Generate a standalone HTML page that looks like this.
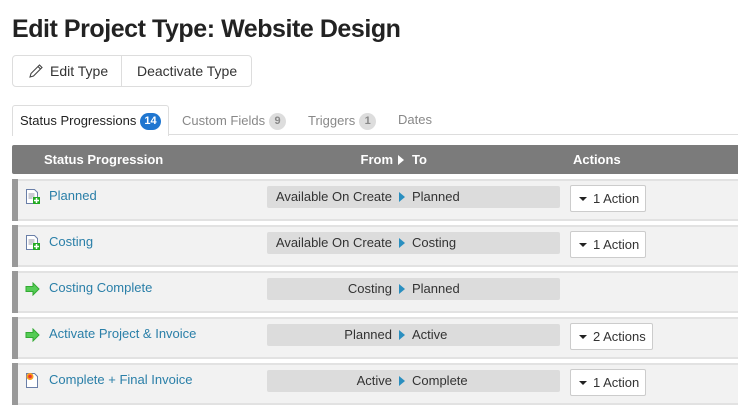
<!DOCTYPE html>
<html><head><meta charset="utf-8"><style>
*{margin:0;padding:0;box-sizing:border-box}
body{width:738px;height:410px;background:#fff;font-family:"Liberation Sans",Arial,sans-serif;position:relative;overflow:hidden;color:#222}
.a{position:absolute}
h1{position:absolute;left:12px;top:15px;font-size:25px;font-weight:bold;color:#222;letter-spacing:-0.45px;white-space:nowrap}
.btns{left:12px;top:55px;width:240px;height:32px;border:1px solid #ddd;border-radius:4px;font-size:14px;color:#333}
.btns .d{position:absolute;left:108px;top:0;bottom:0;border-left:1px solid #ddd}
.tab{font-size:13px;white-space:nowrap}
.badge{display:inline-block;border-radius:9px;height:17px;min-width:17px;padding:0 4px;font-size:11px;line-height:17px;text-align:center;font-weight:bold;vertical-align:1px;margin-left:4px}
.hdr{left:12px;top:145px;width:726px;height:29px;background:#7b7b7b;color:#fff;font-size:13px;font-weight:bold;border-radius:2px 0 0 2px}
.row{left:12px;width:726px;height:42px;background:#f2f2f2;border-top:2px solid #e2e2e2;border-bottom:2px solid #e2e2e2}
.row .bar{position:absolute;left:0;top:-2px;bottom:-2px;width:6px;background:#999}
.row .nm{position:absolute;left:37px;top:7px;font-size:13px;color:#2a7fa8;white-space:nowrap}
.row .ic{position:absolute;left:13px;top:7px}
.pill{position:absolute;left:255px;top:5px;width:293px;height:22px;background:#dcdcdc;border-radius:2px;font-size:13px;color:#333}
.pill .f{position:absolute;right:168px;top:3px;white-space:nowrap}
.pill .t{position:absolute;left:145px;top:3px;white-space:nowrap}
.pill .ar{position:absolute;left:132px;top:6px;width:0;height:0;border-left:6px solid #2a8fc0;border-top:5px solid transparent;border-bottom:5px solid transparent}
.act{position:absolute;left:558px;top:4px;height:27px;background:#fff;border:1px solid #ccc;border-radius:2px;font-size:13px;color:#333;padding:0 6px 0 22px;line-height:25px;white-space:nowrap}
.act:before{content:"";position:absolute;left:8px;top:11px;border-top:4px solid #222;border-left:4px solid transparent;border-right:4px solid transparent}
</style></head><body>
<h1>Edit Project Type: Website Design</h1>
<div class="a btns"><div class="d"></div>
<svg class="a" style="left:15px;top:7px" width="16" height="16" viewBox="0 0 16 16"><path d="M2 14 L3 10.5 L11.5 2 L14 4.5 L5.5 13 Z M10 3.5 L12.5 6" fill="none" stroke="#444" stroke-width="1.1"/></svg>
<span class="a" style="left:37px;top:7px">Edit Type</span>
<span class="a" style="left:124px;top:7px">Deactivate Type</span></div>
<div class="a" style="left:12px;top:105px;width:157px;height:31px;border:1px solid #ddd;border-bottom:none;border-radius:3px 3px 0 0;background:#fff"></div>
<div class="a" style="left:169px;top:134px;width:569px;border-top:1px solid #ddd"></div>
<div class="a tab" style="left:20px;top:113px;color:#222">Status Progressions<span class="badge" style="background:#1f76d0;color:#fff">14</span></div>
<div class="a tab" style="left:182px;top:113px;color:#888">Custom Fields<span class="badge" style="background:#ddd;color:#888">9</span></div>
<div class="a tab" style="left:308px;top:113px;color:#888">Triggers<span class="badge" style="background:#ddd;color:#888">1</span></div>
<div class="a tab" style="left:398px;top:112px;color:#888">Dates</div>
<div class="a hdr"><span class="a" style="left:32px;top:7px">Status Progression</span>
<span class="a" style="right:345px;top:7px">From</span><span class="a" style="left:386px;top:10px;border-left:6px solid #fff;border-top:5px solid transparent;border-bottom:5px solid transparent"></span><span class="a" style="left:400px;top:7px">To</span>
<span class="a" style="left:561px;top:7px">Actions</span></div>

<div class="a row" style="top:179px"><div class="bar"></div>
<svg class="ic" width="16" height="18" viewBox="0 0 16 18"><path d="M1.5 1.5h8l3 3v11h-11z" fill="#fff" stroke="#6a7fa8"/><path d="M3.5 6h6M3.5 8h6M3.5 10h4" stroke="#99a"/><rect x="8" y="9" width="7" height="7" fill="#2a2"/><path d="M11.5 10v5M9 12.5h5" stroke="#fff" stroke-width="1.5"/></svg>
<span class="nm">Planned</span><div class="pill"><span class="f">Available On Create</span><span class="ar"></span><span class="t">Planned</span></div><div class="act">1 Action</div></div>

<div class="a row" style="top:225px"><div class="bar"></div>
<svg class="ic" width="16" height="18" viewBox="0 0 16 18"><path d="M1.5 1.5h8l3 3v11h-11z" fill="#fff" stroke="#6a7fa8"/><path d="M3.5 6h6M3.5 8h6M3.5 10h4" stroke="#99a"/><rect x="8" y="9" width="7" height="7" fill="#2a2"/><path d="M11.5 10v5M9 12.5h5" stroke="#fff" stroke-width="1.5"/></svg>
<span class="nm">Costing</span><div class="pill"><span class="f">Available On Create</span><span class="ar"></span><span class="t">Costing</span></div><div class="act">1 Action</div></div>

<div class="a row" style="top:271px"><div class="bar"></div>
<svg class="ic" style="top:9px" width="16" height="14" viewBox="0 0 16 14"><path d="M1 4.5h7V1l6 6-6 6V9.5H1z" fill="#5c5" stroke="#3a3"/></svg>
<span class="nm">Costing Complete</span><div class="pill"><span class="f">Costing</span><span class="ar"></span><span class="t">Planned</span></div></div>

<div class="a row" style="top:317px"><div class="bar"></div>
<svg class="ic" style="top:9px" width="16" height="14" viewBox="0 0 16 14"><path d="M1 4.5h7V1l6 6-6 6V9.5H1z" fill="#5c5" stroke="#3a3"/></svg>
<span class="nm">Activate Project &amp; Invoice</span><div class="pill"><span class="f">Planned</span><span class="ar"></span><span class="t">Active</span></div><div class="act">2 Actions</div></div>

<div class="a row" style="top:363px"><div class="bar"></div>
<svg class="ic" width="16" height="18" viewBox="0 0 16 18"><path d="M1.5 1.5h8l3 3v11h-11z" fill="#fff" stroke="#6a7fa8"/><circle cx="5" cy="4.5" r="3.5" fill="#f5a020"/><circle cx="5" cy="4.5" r="1.8" fill="#e33"/></svg>
<span class="nm">Complete + Final Invoice</span><div class="pill"><span class="f">Active</span><span class="ar"></span><span class="t">Complete</span></div><div class="act">1 Action</div></div>
</body></html>
